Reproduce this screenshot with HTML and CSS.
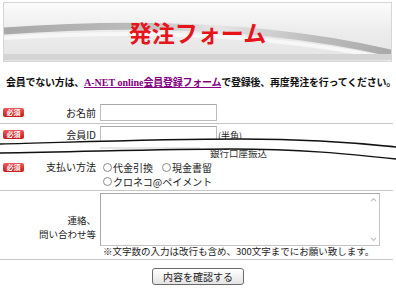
FILE: index.html
```html
<!DOCTYPE html>
<html>
    <head>
        <meta charset="utf-8" />
        <title>発注フォーム</title>
        <link rel="stylesheet" href="styles.css">
    </head>
    <body>
        <div class="page">
            <div class="banner">
                <h1 class="banner-title">発注フォーム</h1>
            </div>
            <p class="lead">会員でない方は、<a href="#" class="lead-link"><span class="latin">A-NET online</span>会員登録フォーム</a>で登録後、再度発注を行ってください。</p>
            <form class="order">
                <div class="row">
                    <span class="req">必須</span>
                    <label class="row-label" for="name">お名前</label>
                    <div class="field"><input id="name" class="text" type="text"></div>
                </div>
                <div class="torn">
                    <div class="row">
                        <span class="req">必須</span>
                        <label class="row-label" for="member">会員ID</label>
                        <div class="field"><input id="member" class="text" type="text"><span class="hint">(半角)</span></div>
                    </div>
                    <div class="row-hidden"><span class="bank">銀行口座振込</span></div>
                    <svg class="tear" width="396" height="28" viewBox="0 0 396 28">
                        <path d="M0,10 C80,8 160,5 240,5 C300,5 350,8 396,13 L396,25 C350,20 300,15 230,15 C160,15 80,18 0,19 Z" fill="#ffffff"/>
                        <path d="M100,14 L200,14" stroke="#d0d0d0" stroke-width="1" fill="none"/>
                        <path d="M0,10 C80,8 160,5 240,5 C300,5 350,8 396,13" stroke="#111111" stroke-width="1.4" fill="none"/>
                        <path d="M0,19 C80,18 160,15 230,15 C300,15 350,20 396,25" stroke="#111111" stroke-width="1.4" fill="none"/>
                    </svg>
                </div>
                <div class="row row-top">
                    <span class="req">必須</span>
                    <span class="row-label">支払い方法</span>
                    <div class="field options">
                        <label class="option"><span class="radio"></span>代金引換</label>
                        <label class="option"><span class="radio"></span>現金書留</label>
                        <label class="option option-wide"><span class="radio"></span>クロネコ@ペイメント</label>
                    </div>
                </div>
                <div class="row row-memo">
                    <span></span>
                    <label class="row-label memo-label" for="memo">連絡、<br>問い合わせ等</label>
                    <div class="field">
                        <div class="memo">
                            <textarea id="memo" class="memo-text"></textarea>
                            <div class="memo-scroll">
                                <svg width="7" height="5" viewBox="0 0 7 5"><path d="M1,4 L3.5,1.5 L6,4" stroke="#c4c4c4" stroke-width="1.2" fill="none"/></svg>
                                <svg width="7" height="5" viewBox="0 0 7 5"><path d="M1,1 L3.5,3.5 L6,1" stroke="#c4c4c4" stroke-width="1.2" fill="none"/></svg>
                            </div>
                        </div>
                        <p class="note">※文字数の入力は改行も含め、300文字までにお願い致します。</p>
                    </div>
                </div>
                <div class="actions">
                    <button type="button" class="confirm">内容を確認する</button>
                </div>
            </form>
        </div>
    </body>
</html>
```

FILE: styles.css
```css
html,
body {
    margin: 0;
    background-color: #ffffff;
    font-family: "Noto Sans CJK JP", "Liberation Sans", sans-serif;
    font-size: 10px;
    color: #1a1a1a;
}
.page {
    width: 396px;
}
.banner {
    box-sizing: border-box;
    height: 60px;
    margin: 2px 4px 0 3px;
    border: 1px solid #d6d6d6;
    display: flex;
    align-items: center;
    justify-content: center;
    background: url("data:image/svg+xml;utf8,<svg xmlns='http://www.w3.org/2000/svg' width='389' height='58' viewBox='0 0 389 58' preserveAspectRatio='none'><defs><linearGradient id='g' x1='0' y1='0' x2='0' y2='1'><stop offset='0' stop-color='%23fbfbfb'/><stop offset='0.5' stop-color='%23ececec'/><stop offset='1' stop-color='%23e4e4e4'/></linearGradient><linearGradient id='s' x1='0' y1='0' x2='1' y2='0'><stop offset='0' stop-color='%23a8a8a8'/><stop offset='0.35' stop-color='%23bcbcbc'/><stop offset='0.55' stop-color='%23e6e6e6'/><stop offset='0.8' stop-color='%23bdbdbd'/><stop offset='1' stop-color='%23a9a9a9'/></linearGradient></defs><rect width='389' height='58' fill='url(%23g)'/><path d='M0,28 C110,20 250,18 389,50' stroke='url(%23s)' stroke-width='7' fill='none'/><path d='M0,35 C110,28 250,27 389,56' stroke='%23f7f7f7' stroke-width='4' fill='none'/><rect y='51' width='389' height='6' fill='%23d4d4d4'/></svg>") no-repeat;
    background-size: 100% 100%;
}
.banner-title {
    margin: 0;
    font-size: 23px;
    font-weight: bold;
    line-height: 1;
    color: #e8141c;
}
.lead {
    margin: 12px 0 0;
    padding-left: 6px;
    font-size: 10px;
    font-weight: bold;
    line-height: 16px;
    white-space: nowrap;
    letter-spacing: -0.25px;
    color: #111111;
}
.lead-link {
    color: #800080;
}
.latin {
    font-family: "Liberation Serif", serif;
    letter-spacing: 0;
}
.order {
    padding-top: 11px;
}
.row {
    display: grid;
    grid-template-columns: 21px 72px 1fr;
    align-items: center;
    padding: 2px 0 2px 3px;
    margin-right: 3px;
    border-bottom: 1px solid #c8c8c8;
}
.req {
    display: block;
    height: 9px;
    border-radius: 2px;
    background: linear-gradient(#ee5a5a, #c81818);
    color: #ffffff;
    font-size: 7px;
    font-weight: bold;
    line-height: 9px;
    text-align: center;
}
.row-label {
    text-align: right;
    font-size: 10px;
    line-height: 14px;
    white-space: nowrap;
}
.field {
    margin-left: 4px;
    display: flex;
    align-items: flex-end;
}
.text {
    box-sizing: border-box;
    width: 117px;
    height: 17px;
    margin: 0;
    border: 1px solid #bcbcbc;
    border-top-color: #a8a8a8;
    background-color: #ffffff;
    outline: none;
}
.hint {
    align-self: center;
    margin: 3px 0 0 1px;
    font-size: 9px;
    line-height: 12px;
}
.torn {
    position: relative;
}
.row-hidden {
    height: 14px;
    padding-left: 210px;
    line-height: 14px;
    color: #333333;
}
.bank {
    font-size: 9.5px;
}
.tear {
    position: absolute;
    left: 0;
    top: 10px;
}
.row-top {
    align-items: start;
    padding-top: 0;
}
.row-top .req {
    margin-top: 3px;
}
.options {
    flex-wrap: wrap;
    align-items: center;
}
.option {
    display: flex;
    align-items: center;
    height: 14px;
    margin-right: 6px;
    font-size: 10px;
    white-space: nowrap;
}
.option-wide {
    width: 100%;
}
.radio {
    box-sizing: border-box;
    width: 9px;
    height: 9px;
    margin: 0 1px 0 3px;
    border: 1px solid #8a8a8a;
    border-radius: 50%;
    background-color: #ffffff;
}
.row-memo {
    padding-bottom: 2px;
}
.memo-label {
    padding-top: 4px;
    font-size: 9.5px;
    line-height: 14px;
}
.row-memo .field {
    flex-direction: column;
    align-items: flex-start;
}
.memo {
    box-sizing: border-box;
    width: 280px;
    height: 53px;
    display: flex;
    border: 1px solid #a8a8a8;
    border-bottom-color: #c4c4c4;
    border-right-color: #c4c4c4;
    background-color: #ffffff;
}
.memo-text {
    flex: 1;
    margin: 0;
    padding: 0;
    border: none;
    outline: none;
    resize: none;
}
.memo-scroll {
    width: 11px;
    display: flex;
    flex-direction: column;
    justify-content: space-between;
    align-items: center;
    padding: 3px 0;
}
.note {
    margin: 0;
    padding-left: 3px;
    font-size: 9.5px;
    line-height: 11px;
    white-space: nowrap;
}
.actions {
    display: flex;
    justify-content: center;
    padding-top: 8px;
}
.confirm {
    box-sizing: border-box;
    width: 92px;
    height: 17px;
    padding: 0;
    border: 1px solid #6a6a6a;
    border-radius: 3px;
    background: linear-gradient(#ffffff, #e4e4e4);
    font-family: "Noto Sans CJK JP", sans-serif;
    font-size: 10px;
    line-height: 15px;
    color: #222222;
}
```
